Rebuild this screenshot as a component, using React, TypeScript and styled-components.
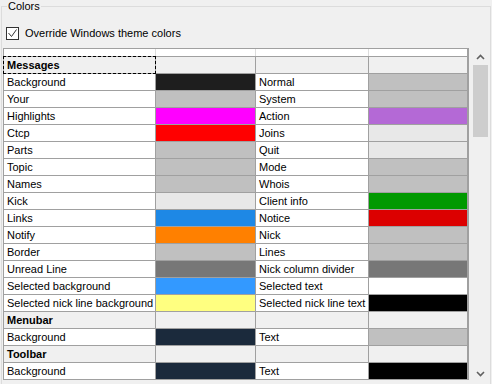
import React from "react";
import styled, { createGlobalStyle } from "styled-components";

const GlobalStyle = createGlobalStyle`
  html, body { margin: 0; padding: 0; background: #f0f0f0; }
  body {
    font-family: "Liberation Sans", Arial, sans-serif;
    font-size: 11px;
    color: #000;
    width: 492px;
    height: 384px;
    overflow: hidden;
  }
`;

type Row =
  | { section: string; focus?: boolean }
  | { a: string; ac: string; b: string; bc: string };

const rows: Row[] = [
  { section: "Messages", focus: true },
  { a: "Background", ac: "#1e1e1e", b: "Normal", bc: "#c0c0c0" },
  { a: "Your", ac: "#c0c0c0", b: "System", bc: "#c0c0c0" },
  { a: "Highlights", ac: "#ff00ff", b: "Action", bc: "#b469d6" },
  { a: "Ctcp", ac: "#ff0000", b: "Joins", bc: "#e8e8e8" },
  { a: "Parts", ac: "#c0c0c0", b: "Quit", bc: "#e8e8e8" },
  { a: "Topic", ac: "#c0c0c0", b: "Mode", bc: "#c0c0c0" },
  { a: "Names", ac: "#c0c0c0", b: "Whois", bc: "#c0c0c0" },
  { a: "Kick", ac: "#e8e8e8", b: "Client info", bc: "#009900" },
  { a: "Links", ac: "#1e88e5", b: "Notice", bc: "#dc0000" },
  { a: "Notify", ac: "#ff8000", b: "Nick", bc: "#c0c0c0" },
  { a: "Border", ac: "#c0c0c0", b: "Lines", bc: "#c0c0c0" },
  { a: "Unread Line", ac: "#777777", b: "Nick column divider", bc: "#777777" },
  { a: "Selected background", ac: "#3399ff", b: "Selected text", bc: "#ffffff" },
  { a: "Selected nick line background", ac: "#ffff80", b: "Selected nick line text", bc: "#000000" },
  { section: "Menubar" },
  { a: "Background", ac: "#1b2a3c", b: "Text", bc: "#c0c0c0" },
  { section: "Toolbar" },
  { a: "Background", ac: "#1b2a3c", b: "Text", bc: "#000000" },
];

const Page = styled.div`
  padding: 6px 0 0 1px;
  height: 384px;
  box-sizing: border-box;
  overflow: hidden;
`;

const GroupBox = styled.div`
  position: relative;
  width: 490px;
  height: 400px;
  box-sizing: border-box;
  border: 1px solid #dcdcdc;
  padding: 0 0 0 1px;
`;

const Legend = styled.span`
  position: absolute;
  top: -7px;
  left: 5px;
  padding: 0 1px;
  background: #f0f0f0;
  line-height: 13px;
`;

const CheckRow = styled.label`
  display: flex;
  align-items: center;
  gap: 6px;
  height: 13px;
  margin: 20px 0 0 3px;
  line-height: 13px;
`;

const CheckBox = styled.span`
  width: 13px;
  height: 13px;
  box-sizing: border-box;
  border: 1px solid #333333;
  background: #ffffff;
  display: flex;
`;

const GridArea = styled.div`
  display: flex;
  align-items: flex-start;
  gap: 3px;
  margin: 8px 0 0 0;
`;

const Table = styled.div`
  display: grid;
  grid-template-columns: 151px 99px 112px 98px;
  grid-template-rows: 7px;
  grid-auto-rows: 16px;
  gap: 1px;
  padding: 1px 2px 1px 1px;
  background: #a0a0a0;
`;

const HeaderRow = styled.div`
  grid-column: 1 / -1;
  display: grid;
  grid-template-columns: 151px 99px 112px 98px;
  gap: 1px;
  background: #dcdcdc;
`;

const HeaderCell = styled.div`
  background: #ffffff;
`;

const Cell = styled.div<{ $bg: string; $bold?: boolean; $focus?: boolean }>`
  position: relative;
  background: ${(p) => p.$bg};
  padding-left: 3px;
  line-height: 17px;
  white-space: nowrap;
  overflow: hidden;
  font-weight: ${(p) => (p.$bold ? 700 : 400)};
  ${(p) => (p.$focus ? "outline: 1px dashed #000; outline-offset: 0; z-index: 1; overflow: visible;" : "")}
`;

const ScrollBar = styled.div`
  width: 17px;
  height: 334px;
  background: #f0f0f0;
  display: flex;
  flex-direction: column;
`;

const ArrowButton = styled.div`
  height: 17px;
  display: flex;
  align-items: center;
  justify-content: center;
`;

const Track = styled.div`
  flex: 1;
  display: flex;
  flex-direction: column;
`;

const Thumb = styled.div`
  height: 72px;
  margin: 0 1px;
  background: #cdcdcd;
`;

const Chevron: React.FC<{ up?: boolean }> = ({ up }) => (
  <svg width="9" height="6" viewBox="0 0 9 6">
    <polyline
      points={up ? "1,5 4.5,1.5 8,5" : "1,1 4.5,4.5 8,1"}
      fill="none"
      stroke="#606060"
      strokeWidth="1.6"
    />
  </svg>
);

export default function App() {
  return (
    <>
      <GlobalStyle />
      <Page>
        <GroupBox>
          <Legend>Colors</Legend>
          <CheckRow>
            <CheckBox>
              <svg width="11" height="11" viewBox="0 0 11 11">
                <polyline points="1.5,5 4.5,8.5 9.5,1.5" fill="none" stroke="#333" strokeWidth="1" />
              </svg>
            </CheckBox>
            <span>Override Windows theme colors</span>
          </CheckRow>
          <GridArea>
            <Table>
              <HeaderRow>
                <HeaderCell />
                <HeaderCell />
                <HeaderCell />
                <HeaderCell />
              </HeaderRow>
              {rows.map((r, i) =>
                "section" in r ? (
                  <React.Fragment key={i}>
                    <Cell $bg="#f0f0f0" $bold $focus={r.focus}>
                      {r.section}
                    </Cell>
                    <Cell $bg="#f0f0f0" />
                    <Cell $bg="#f0f0f0" />
                    <Cell $bg="#f0f0f0" />
                  </React.Fragment>
                ) : (
                  <React.Fragment key={i}>
                    <Cell $bg="#ffffff">{r.a}</Cell>
                    <Cell $bg={r.ac} />
                    <Cell $bg="#ffffff">{r.b}</Cell>
                    <Cell $bg={r.bc} />
                  </React.Fragment>
                )
              )}
            </Table>
            <ScrollBar>
              <ArrowButton>
                <Chevron up />
              </ArrowButton>
              <Track>
                <Thumb />
              </Track>
              <ArrowButton>
                <Chevron />
              </ArrowButton>
            </ScrollBar>
          </GridArea>
        </GroupBox>
      </Page>
    </>
  );
}
